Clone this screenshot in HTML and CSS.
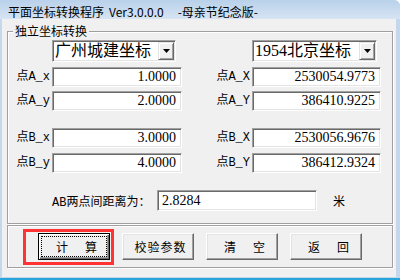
FILE: index.html
```html
<!DOCTYPE html>
<html lang="zh-CN">
<head>
<meta charset="utf-8">
<title>平面坐标转换程序</title>
<link rel="stylesheet" href="styles.css">
</head>
<body>
<div class="window">
  <div class="titlebar"><span>平面坐标转换程序</span><span class="ver">Ver3.0.0.0</span><span class="ed">-母亲节纪念版-</span></div>
  <div class="client">
    <fieldset class="group main">
      <legend>独立坐标转换</legend>
      <div class="pair combos">
        <span></span>
        <div class="combo w124"><span class="combo-text">广州城建坐标</span><span class="drop"><svg width="7" height="4" viewBox="0 0 7 4"><polygon points="0,0 7,0 3.5,4" fill="#000"/></svg></span></div>
        <span></span>
        <div class="combo w125"><span class="combo-text">1954北京坐标</span><span class="drop"><svg width="7" height="4" viewBox="0 0 7 4"><polygon points="0,0 7,0 3.5,4" fill="#000"/></svg></span></div>
      </div>
      <div class="pair r-ax">
        <span class="lbl">点A_x</span><div class="field">1.0000</div>
        <span class="lbl">点A_X</span><div class="field">2530054.9773</div>
      </div>
      <div class="pair r-ay">
        <span class="lbl">点A_y</span><div class="field">2.0000</div>
        <span class="lbl">点A_Y</span><div class="field">386410.9225</div>
      </div>
      <div class="pair r-bx">
        <span class="lbl">点B_x</span><div class="field">3.0000</div>
        <span class="lbl">点B_X</span><div class="field">2530056.9676</div>
      </div>
      <div class="pair r-by">
        <span class="lbl">点B_y</span><div class="field">4.0000</div>
        <span class="lbl">点B_Y</span><div class="field">386412.9324</div>
      </div>
      <div class="dist">
        <span class="dist-label">AB两点间距离为：</span>
        <div class="field dist-field">2.8284</div>
        <span class="unit">米</span>
      </div>
    </fieldset>
    <div class="group buttons">
      <span class="mark-wrap"><button class="btn default" type="button"><span>计</span><span>算</span></button><span class="mark"></span></span>
      <button class="btn spaced" type="button"><span>校验参数</span></button>
      <button class="btn" type="button"><span>清</span><span>空</span></button>
      <button class="btn" type="button"><span>返</span><span>回</span></button>
    </div>
  </div>
</div>
</body>
</html>
```
FILE: styles.css
```css
html, body {
  margin: 0;
  padding: 0;
}
body {
  width: 400px;
  height: 280px;
  overflow: hidden;
  background: #fff;
  font-family: "Noto Sans CJK SC", sans-serif;
  font-size: 12px;
  color: #000;
}
.window {
  box-sizing: border-box;
  width: 400px;
  height: 280px;
  background: #c4d7ec;
  border-bottom: 2px solid #27a5da;
  border-top-right-radius: 6px;
  display: flex;
  flex-direction: column;
}
.titlebar {
  flex: none;
  box-sizing: border-box;
  height: 19px;
  padding: 5px 0 0 8px;
  line-height: 14px;
  white-space: nowrap;
  background: linear-gradient(#b9d1ea, #d6e4f3);
  border-top-right-radius: 6px;
}
.ver { margin-left: 5px; }
.ed { margin-left: 14px; }
.client {
  flex: 1;
  margin: 0 4px 1px 2px;
  background: #f0f0f0;
  display: flow-root;
}
.group {
  border: 1px solid #a0a0a0;
  box-shadow: inset 1px 1px #fff, 1px 1px #fff;
  margin: 0 3px 0 5px;
}
fieldset.main {
  margin-top: 5px;
  padding: 2px 0 12px 0;
  min-width: 0;
}
legend {
  margin-left: 5px;
  padding: 0 2px;
  line-height: 14px;
  font-size: 12px;
  background: #f0f0f0;
}
.pair {
  display: grid;
  grid-template-columns: 44px 130px 70px 129px;
  align-items: center;
}
.combos { height: 22px; }
.r-ax { margin-top: 5px; }
.r-ay { margin-top: 4px; }
.r-bx { margin-top: 17px; }
.r-by { margin-top: 5px; }
.lbl {
  text-align: right;
  padding-right: 2px;
  font-family: "Liberation Mono", "Noto Sans CJK SC", monospace;
  font-size: 12px;
  line-height: 14px;
  white-space: nowrap;
}
.field {
  box-sizing: border-box;
  height: 20px;
  background: #fff;
  border: 1px solid;
  border-color: #a0a0a0 #fff #fff #a0a0a0;
  box-shadow: inset 1px 1px #696969, inset -1px -1px #e3e3e3;
  font-family: "Liberation Serif", serif;
  font-size: 14px;
  line-height: 18px;
  text-align: right;
  padding: 0 5px 0 3px;
  white-space: nowrap;
}
.combo {
  box-sizing: border-box;
  height: 22px;
  display: flex;
  background: #fff;
  border: 1px solid;
  border-color: #a0a0a0 #fff #fff #a0a0a0;
  box-shadow: inset 1px 1px #696969, inset -1px -1px #e3e3e3;
  padding: 1px;
}
.w124 { width: 124px; }
.w125 { width: 125px; }
.combo-text {
  flex: 1;
  font-family: "Liberation Serif", "Noto Sans CJK SC", serif;
  font-size: 16px;
  line-height: 18px;
  padding-left: 1px;
  white-space: nowrap;
  overflow: hidden;
}
.drop {
  flex: none;
  box-sizing: border-box;
  width: 16px;
  height: 18px;
  background: #f0f0f0;
  border: 1px solid;
  border-color: #e3e3e3 #696969 #696969 #e3e3e3;
  box-shadow: inset 1px 1px #fff, inset -1px -1px #a0a0a0;
  display: flex;
  align-items: center;
  justify-content: center;
}
.drop svg { display: block; }
.dist {
  display: flex;
  align-items: center;
  margin: 17px 0 0 44px;
}
.dist-label {
  width: 105px;
  font-family: "Liberation Mono", "Noto Sans CJK SC", monospace;
  font-size: 12px;
  white-space: nowrap;
}
.dist-field {
  width: 160px;
  height: 21px;
  line-height: 19px;
  text-align: left;
  padding: 0 3px 0 4px;
}
.unit { margin-left: 16px; }
.buttons {
  margin-top: 1px;
  display: flex;
  gap: 12px;
  padding: 7px 0 7px 30px;
}
.btn {
  appearance: none;
  margin: 0;
  width: 72px;
  height: 27px;
  box-sizing: border-box;
  padding: 0 0 0 5px;
  font-family: "Noto Sans CJK SC", sans-serif;
  font-size: 12px;
  color: #000;
  background: #f0f0f0;
  border: 1px solid;
  border-color: #fff #696969 #696969 #fff;
  box-shadow: inset -1px -1px #a0a0a0, inset 1px 1px #e3e3e3;
  display: flex;
  align-items: center;
  justify-content: center;
  gap: 17px;
}
.btn.spaced { letter-spacing: 1px; }
.btn.default {
  border-color: #000;
  box-shadow: inset 1px 1px #fff, inset -1px -1px #696969, inset -2px -2px #a0a0a0;
  outline: 1px dotted #000;
  outline-offset: -4px;
}
.mark-wrap {
  position: relative;
  display: flex;
}
.mark {
  position: absolute;
  left: -15px;
  top: -4px;
  right: -4px;
  bottom: -5px;
  border: 3px solid #ff3333;
  pointer-events: none;
}
```
